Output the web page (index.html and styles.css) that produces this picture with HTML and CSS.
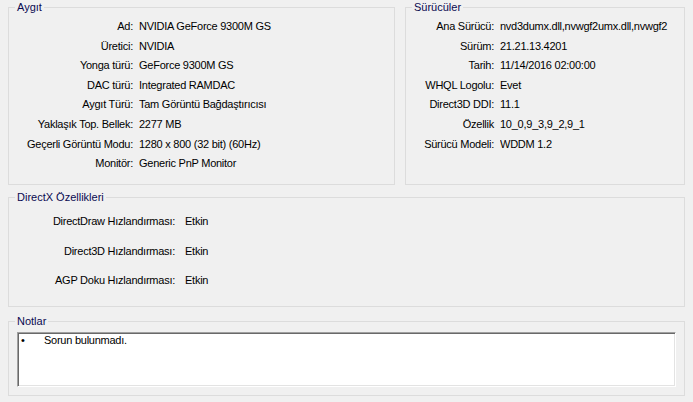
FILE: index.html
```html
<!DOCTYPE html>
<html lang="tr">
<head>
  <meta charset="UTF-8">
  <title>DirectX Tanı Aracı - Görüntü</title>
  <link rel="stylesheet" href="styles.css">
</head>
<body>

  <div class="window">
    <div class="top">
      <fieldset class="group device">
        <legend>Aygıt</legend>
        <div class="props">
          <span class="label">Ad:</span><span class="value">NVIDIA GeForce 9300M GS</span>
          <span class="label">Üretici:</span><span class="value">NVIDIA</span>
          <span class="label">Yonga türü:</span><span class="value">GeForce 9300M GS</span>
          <span class="label">DAC türü:</span><span class="value">Integrated RAMDAC</span>
          <span class="label">Aygıt Türü:</span><span class="value">Tam Görüntü Bağdaştırıcısı</span>
          <span class="label">Yaklaşık Top. Bellek:</span><span class="value">2277 MB</span>
          <span class="label">Geçerli Görüntü Modu:</span><span class="value">1280 x 800 (32 bit) (60Hz)</span>
          <span class="label">Monitör:</span><span class="value">Generic PnP Monitor</span>
        </div>
      </fieldset>

      <fieldset class="group drivers">
        <legend>Sürücüler</legend>
        <div class="props">
          <span class="label">Ana Sürücü:</span><span class="value">nvd3dumx.dll,nvwgf2umx.dll,nvwgf2</span>
          <span class="label">Sürüm:</span><span class="value">21.21.13.4201</span>
          <span class="label">Tarih:</span><span class="value">11/14/2016 02:00:00</span>
          <span class="label">WHQL Logolu:</span><span class="value">Evet</span>
          <span class="label">Direct3D DDI:</span><span class="value">11.1</span>
          <span class="label">Özellik</span><span class="value">10_0,9_3,9_2,9_1</span>
          <span class="label">Sürücü Modeli:</span><span class="value">WDDM 1.2</span>
        </div>
      </fieldset>
    </div>

    <fieldset class="group directx">
      <legend>DirectX Özellikleri</legend>
      <div class="props">
        <span class="label">DirectDraw Hızlandırması:</span><span class="value">Etkin</span>
        <span class="label">Direct3D Hızlandırması:</span><span class="value">Etkin</span>
        <span class="label">AGP Doku Hızlandırması:</span><span class="value">Etkin</span>
      </div>
    </fieldset>

    <fieldset class="group notes">
      <legend>Notlar</legend>
      <div class="notes-box">
        <div class="note"><span class="bullet">•</span>Sorun bulunmadı.</div>
      </div>
    </fieldset>
  </div>

</body>
</html>
```

FILE: styles.css
```css
* {
  box-sizing: border-box;
}
body {
  margin: 0;
  background: #f0f0f0;
  font-family: 'Liberation Sans', Arial, sans-serif;
  font-size: 11px;
  color: #000;
}
.window {
  display: flex;
  flex-direction: column;
  padding: 0 8px;
}
.top {
  display: flex;
  gap: 10px;
  height: 185px;
}

.group {
  margin: 0;
  padding: 0;
  border: 1px solid #dcdcdc;
  min-width: 0;
}
.group legend {
  margin-left: 6px;
  padding: 0 2px;
  line-height: 14px;
  color: #0a0a50;
}
.device {
  width: 387px;
}
.drivers {
  width: 280px;
}
.directx {
  margin-top: 5px;
  height: 117px;
}
.notes {
  margin-top: 7px;
  height: 82px;
}

.props {
  display: grid;
  grid-auto-rows: 19.6px;
  line-height: 19.6px;
  padding-top: 3px;
  letter-spacing: -0.25px;
}
.props .label {
  text-align: right;
  white-space: nowrap;
}
.props .value {
  white-space: nowrap;
  overflow: hidden;
}
.device .props {
  grid-template-columns: 124px 1fr;
  column-gap: 6px;
}
.drivers .props {
  grid-template-columns: 88px 1fr;
  column-gap: 6px;
}
.directx .props {
  grid-template-columns: 166px 1fr;
  column-gap: 10px;
  grid-auto-rows: 29.65px;
  line-height: 29.65px;
}

.notes-box {
  margin: 4px 8px 0 8px;
  height: 55px;
  background: #fff;
  border: 1px solid;
  border-color: #a0a0a0 #fff #fff #a0a0a0;
  box-shadow: inset 1px 1px 0 #696969, inset -1px -1px 0 #e3e3e3;
  padding: 1px 2px;
}
.note {
  display: flex;
  line-height: 13px;
  letter-spacing: -0.25px;
}
.bullet {
  width: 24px;
  padding-left: 1px;
}
```
